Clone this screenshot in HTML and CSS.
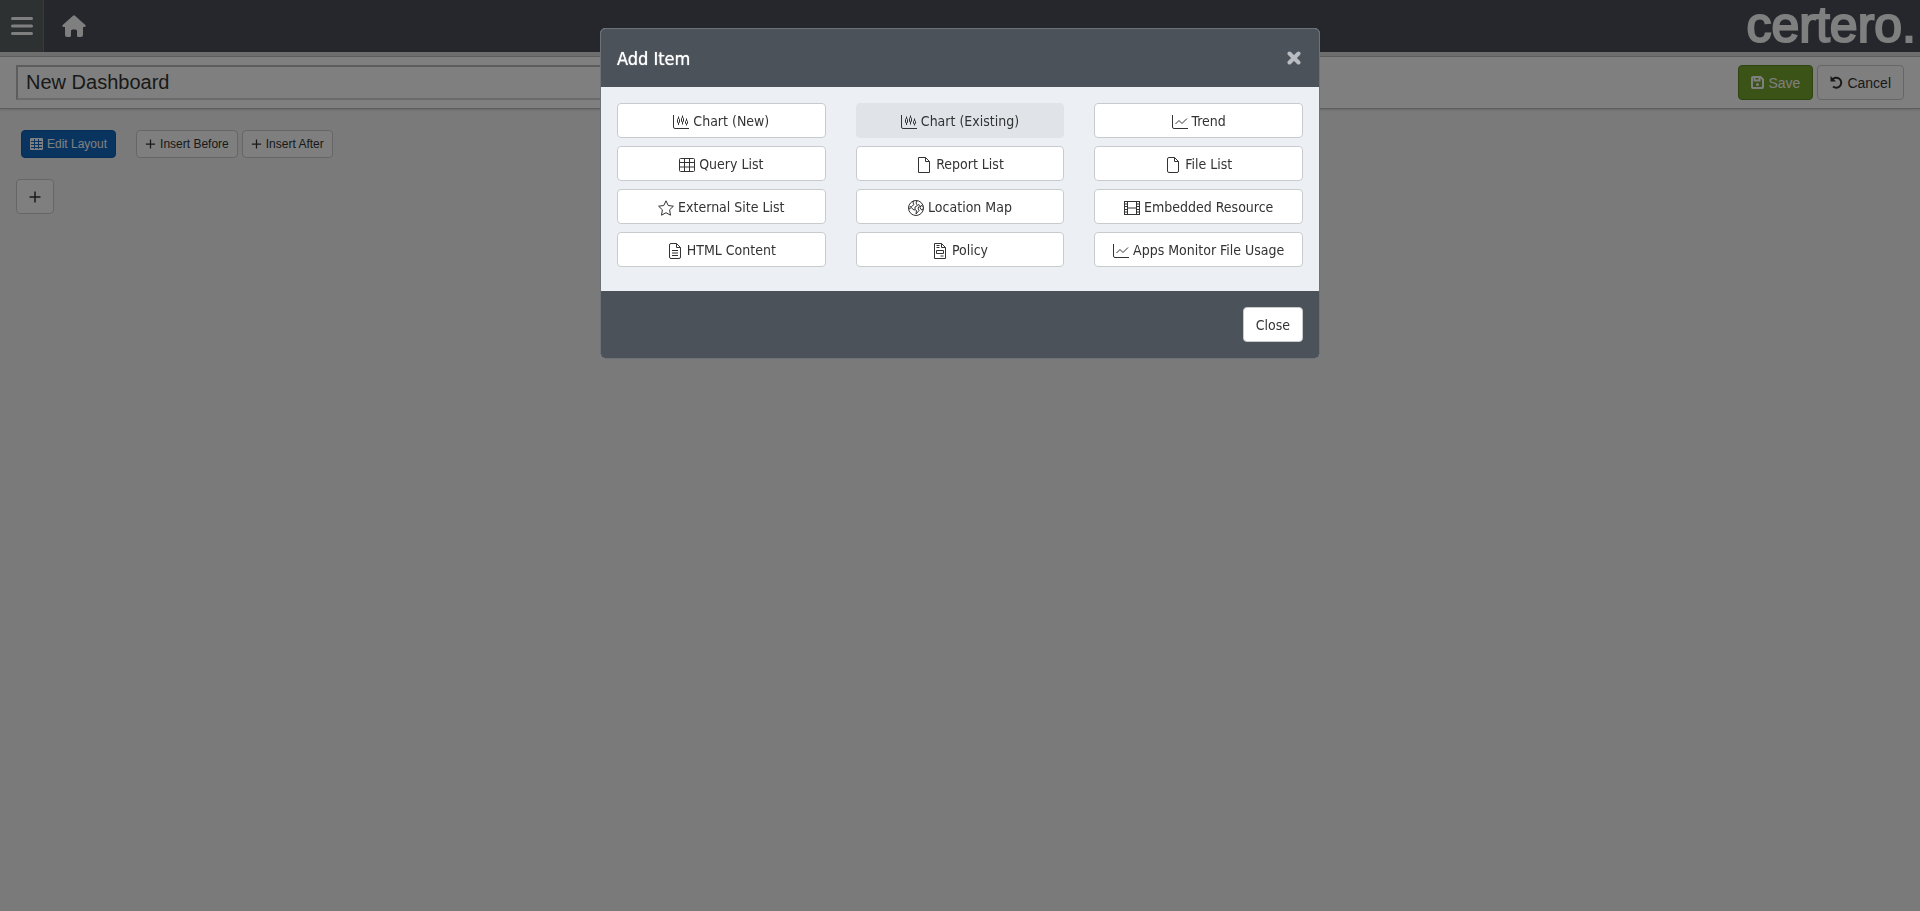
FILE: index.html
```html
<!DOCTYPE html>
<html lang="en">
<head>
<meta charset="utf-8">
<meta name="viewport" content="width=device-width, initial-scale=1">
<title>New Dashboard</title>
<link rel="stylesheet" href="styles.css">
</head>
<body>
<svg class="sprite" aria-hidden="true">
  <symbol id="i-chart" viewBox="0 0 16 16"><path d="M.5 1v12q0 1.500 1.500 1.500h14"/><path d="M5.500 2.500v2M5.500 9v2M9.500 1.500v2M9.500 8v2.500M13.500 4.500v2M13.500 10v1.500"/><rect x="4.500" y="4.500" width="2" height="4.500" rx="1"/><rect x="8.500" y="3.500" width="2" height="4.500" rx="1"/><rect x="12.500" y="6.500" width="2" height="3.500" rx="1"/></symbol>
  <symbol id="i-trend" viewBox="0 0 16 16"><path d="M.5 1v12q0 1.500 1.500 1.500h14"/><path d="M3.500 10l3.500-3.500 3 3 5-5"/></symbol>
  <symbol id="i-table" viewBox="0 0 16 16"><rect x=".5" y="1.500" width="15" height="13" rx="1"/><path d="M.5 5.500h15M.5 10h15M5.500 1.500v13M10.500 1.500v13"/></symbol>
  <symbol id="i-page" viewBox="0 0 16 16"><path d="M2.500.5h7l4 4v11h-11zM9.500.5v4h4"/></symbol>
  <symbol id="i-file" viewBox="0 0 16 16"><path d="M4 .5h5.500l4 4V14q0 1.500-1.500 1.500H4q-1.500 0-1.500-1.500V2Q2.500.5 4 .5zM9.500.5v4h4"/></symbol>
  <symbol id="i-text" viewBox="0 0 16 16"><path d="M4 .5h5.500l4 4V14q0 1.500-1.500 1.500H4q-1.500 0-1.500-1.500V2Q2.500.5 4 .5zM9.500.5v4h4M5 7.500h6M5 10h6M5 12.500h6"/></symbol>
  <symbol id="i-star" viewBox="0 0 16 16"><path d="M8 .8l2.200 4.700 5.200.7-3.800 3.600.9 5.400L8 12.700l-4.500 2.500.9-5.400L.6 6.200l5.200-.7z"/></symbol>
  <symbol id="i-globe" viewBox="0 0 16 16"><circle cx="8" cy="8" r="7.500"/><path d="M1 9l2.500-1.500L5 9.500l2 .5M5.500.9L5 3l1 1.500L3.500 6.500l-2 .5M9 .7L8 3l1.500 2.500L7 7v2.500l1.500 1L8 14l3-3.500L10 8l1.500-2-1-2M15.200 6.500L13 5.500 12 7.500l1 2 1.500.5.500-1.500"/></symbol>
  <symbol id="i-film" viewBox="0 0 16 16"><rect x=".5" y="1.500" width="15" height="13"/><path d="M3.500 1.500v13M12.500 1.500v13M3.500 8h9M.5 4h3M.5 6.500h3M.5 9.500h3M.5 12h3M12.500 4h3M12.500 6.500h3M12.500 9.500h3M12.500 12h3"/></symbol>
  <symbol id="i-policy" viewBox="0 0 16 16"><path d="M2.500.5h7l4 4v11h-11zM9.500.5v4h4M4.500 2.500h3M4.500 4.500h3M4.500 7.500h7v3h-7zM8.500 13h3"/></symbol>
  <symbol id="i-plus" viewBox="0 0 12 12"><path stroke-width="1.500" d="M6 .5v11M.5 6h11"/></symbol>
</svg>

<header class="topbar">
  <button class="menu-btn" type="button" aria-label="Menu"><svg viewBox="0 0 22 18"><path d="M1.500 1.500h19M1.500 9h19M1.500 16.500h19"/></svg></button>
  <a class="home" href="#" aria-label="Home"><svg viewBox="0 0 24 22"><path d="M11 .8q1-.9 2 0l10.300 9.200q.7.700.3 1.300-.4.600-1.300.6H21v8q0 2-2 2h-2.500q-1.500 0-1.500-1.500V16q0-1.500-1.500-1.500h-3Q9 14.500 9 16v4.400q0 1.500-1.500 1.500H5q-2 0-2-2v-8H1.700q-.9 0-1.300-.6-.4-.6.3-1.300z"/></svg></a>
  <a class="logo" href="#">certero.</a>
</header>

<main>
  <div class="titlebar">
    <input class="title-input" type="text" aria-label="Dashboard name" value="New Dashboard">
    <button class="btn btn-save" type="button"><svg class="ic13" viewBox="0 0 13 13"><path d="M2 1h7.500L12 3.500V11q0 1-1 1H2q-1 0-1-1V2q0-1 1-1z"/><path d="M3.500 1v3.500h5V1"/><circle class="solid" cx="6.500" cy="8.500" r="1.500"/></svg>Save</button>
    <button class="btn" type="button"><svg class="ic13" viewBox="0 0 13 13"><path d="M2.200 3.800A5 5 0 1 1 3 10.500"/><path class="solid" d="M.5 0v5.500H6z"/></svg>Cancel</button>
  </div>
  <div class="layout-tools">
    <button class="btn btn-sm btn-primary" type="button"><svg class="ic12" viewBox="0 0 13 12"><rect class="solid" x="0" y="0" width="13" height="12" rx="1"/><path class="grid-lines" d="M1 3.500h11M1 6.500h11M1 9.500h11M4.500 1v10M8.500 1v10"/></svg>Edit Layout</button>
    <div class="insert-group">
      <button class="btn btn-sm" type="button"><svg class="ic10"><use href="#i-plus"/></svg>Insert Before</button>
      <button class="btn btn-sm" type="button"><svg class="ic10"><use href="#i-plus"/></svg>Insert After</button>
    </div>
  </div>
  <button class="btn btn-add" type="button" aria-label="Add item"><svg class="ic-add"><use href="#i-plus"/></svg></button>
</main>

<div class="backdrop">
  <section class="modal" role="dialog" aria-modal="true" aria-labelledby="modal-title">
    <header class="modal-header">
      <h1 class="modal-title" id="modal-title">Add Item</h1>
      <button class="modal-x" type="button" aria-label="Dismiss"><svg viewBox="0 0 14 14"><path d="M2.500 2.500l9 9M11.500 2.500l-9 9"/></svg></button>
    </header>
    <div class="modal-body">
      <button class="item" type="button"><svg><use href="#i-chart"/></svg>Chart (New)</button>
      <button class="item item-active" type="button"><svg><use href="#i-chart"/></svg>Chart (Existing)</button>
      <button class="item" type="button"><svg><use href="#i-trend"/></svg>Trend</button>
      <button class="item" type="button"><svg><use href="#i-table"/></svg>Query List</button>
      <button class="item" type="button"><svg><use href="#i-page"/></svg>Report List</button>
      <button class="item" type="button"><svg><use href="#i-file"/></svg>File List</button>
      <button class="item" type="button"><svg><use href="#i-star"/></svg>External Site List</button>
      <button class="item" type="button"><svg><use href="#i-globe"/></svg>Location Map</button>
      <button class="item" type="button"><svg><use href="#i-film"/></svg>Embedded Resource</button>
      <button class="item" type="button"><svg><use href="#i-text"/></svg>HTML Content</button>
      <button class="item" type="button"><svg><use href="#i-policy"/></svg>Policy</button>
      <button class="item" type="button"><svg><use href="#i-trend"/></svg>Apps Monitor File Usage</button>
    </div>
    <footer class="modal-footer">
      <button class="item" type="button">Close</button>
    </footer>
  </section>
</div>
</body>
</html>
```

FILE: styles.css
```css
* { box-sizing: border-box; }

body {
  margin: 0;
  min-height: 100vh;
  background: #f5f5f5;
  color: #333;
  font-family: "Liberation Sans", Arial, sans-serif;
  font-size: 14px;
}

svg { fill: none; stroke: currentColor; flex: none; }
.sprite { display: none; }
button { font: inherit; color: inherit; cursor: pointer; }

.topbar {
  display: flex;
  align-items: center;
  height: 52px;
  background: #4a4f58;
  color: #fff;
}
.menu-btn {
  display: flex;
  align-items: center;
  justify-content: center;
  width: 44px;
  height: 52px;
  padding: 0;
  border: 0;
  border-right: 1px solid #6e7579;
  background: #5b6265;
  color: #fff;
}
.menu-btn svg { width: 22px; height: 18px; stroke-width: 3; stroke-linecap: round; }
.home { display: flex; margin-left: 18px; color: #fff; }
.home svg { width: 24px; height: 22px; fill: currentColor; stroke: none; }
.logo {
  align-self: flex-start;
  margin-left: auto;
  padding-right: 4px;
  color: #fff;
  font-size: 50px;
  line-height: 50px;
  text-decoration: none;
  -webkit-text-stroke: 2px #fff;
}

.titlebar {
  display: flex;
  gap: 4px;
  padding: 8px 16px;
  margin-top: 4px;
  border-top: 1px solid #bbb;
  border-bottom: 1px solid #bbb;
  background: #fff;
  box-shadow: 0 -4px 0 #dcdcdc, 0 1px 2px #d0d0d0;
}
.title-input {
  width: 50%;
  height: 35px;
  margin-right: auto;
  padding: 0 8px;
  border: 2px solid;
  border-color: #bbb #d5d5d5 #d5d5d5 #bbb;
  background: #fff;
  color: #333;
  font: inherit;
  font-size: 20px;
}
.btn {
  display: inline-flex;
  align-items: center;
  gap: 4px;
  height: 35px;
  padding: 0 12px;
  border: 1px solid #ccc;
  border-radius: 4px;
  background: #fff;
}
.btn-save { border-color: #5f8a20; background: #77a62d; color: #fff; }
.ic13 { width: 13px; height: 13px; stroke-width: 2; overflow: visible; }
.ic12 { width: 13px; height: 12px; }
.ic10 { width: 11px; height: 10px; }
.ic-add { width: 12px; height: 12px; }
.solid { fill: currentColor; stroke: none; }
.grid-lines { stroke: #1269c0; }

.layout-tools { display: flex; gap: 20px; padding: 21px; }
.insert-group { display: flex; gap: 4px; }
.btn-sm { height: 28px; padding: 0 8px; font-size: 12px; }
.btn-primary { border-color: #0f5ca8; background: #1269c0; color: #fff; }
.btn-add { margin-left: 16px; }

.backdrop {
  position: fixed;
  inset: 0;
  overflow: auto;
  padding: 28px 16px;
  background: rgba(0, 0, 0, .5);
  font-family: "DejaVu Sans Condensed", Tahoma, sans-serif;
}
.modal {
  max-width: 720px;
  margin: 0 auto;
  overflow: hidden;
  border: 1px solid #6c7278;
  border-radius: 5px;
  background: #ecf0f4;
}
.modal-header {
  display: flex;
  align-items: center;
  justify-content: space-between;
  height: 58px;
  padding: 0 16px;
  background: #4b525a;
}
.modal-title {
  margin: 0;
  color: #fff;
  font-size: 18px;
  font-weight: 500;
  text-shadow: 0 0 1px #fff;
}
.modal-x { display: flex; padding: 0; margin-right: 2px; border: 0; background: none; color: #b9bdc2; }
.modal-x svg { width: 14px; height: 14px; stroke-width: 4; stroke-linecap: round; }
.modal-body {
  display: grid;
  grid-template-columns: repeat(3, 1fr);
  gap: 8px 30px;
  padding: 16px 16px 24px;
}
.item {
  display: flex;
  align-items: center;
  justify-content: center;
  gap: 4px;
  height: 35px;
  padding: 0 12px;
  border: 1px solid #c8cbce;
  border-radius: 4px;
  background: #fff;
  color: #333;
  font-size: 14px;
}
.item svg { width: 16px; height: 16px; margin-top: 2px; }
.item-active { border-color: #e0e4e9; background: #e0e4e9; }
.modal-footer {
  display: flex;
  justify-content: flex-end;
  padding: 16px;
  background: #4b525a;
}
```
